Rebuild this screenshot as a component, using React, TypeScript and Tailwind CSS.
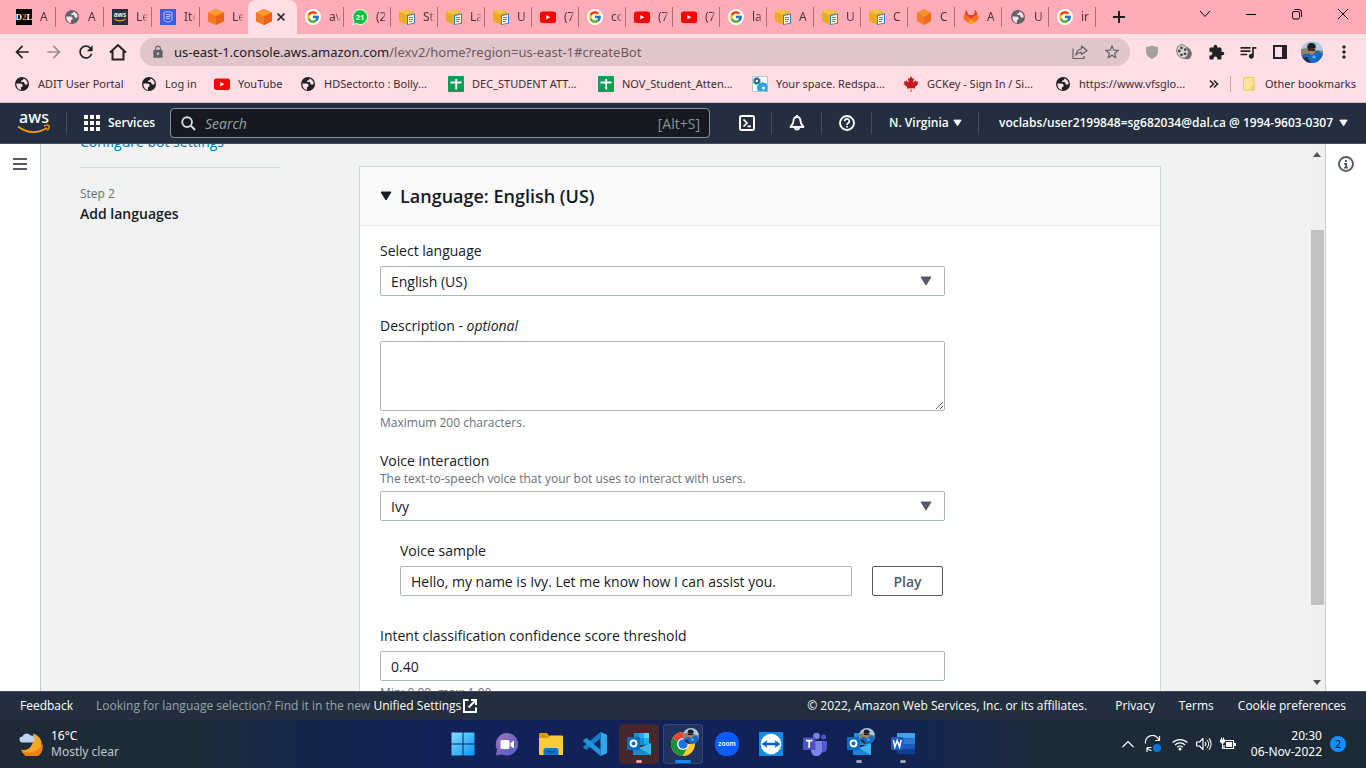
import React from "react";
import { FcGoogle } from "react-icons/fc";
import { FaCanadianMapleLeaf } from "react-icons/fa";
import {
  MdArrowBack,
  MdArrowForward,
  MdRefresh,
  MdLock,
  MdStarBorder,
  MdExtension,
  MdQueueMusic,
  MdMoreVert,
} from "react-icons/md";

/* ---------- Favicons ---------- */

function Globe({ className }: { className: string }) {
  return (
    <svg viewBox="0 0 16 16" className={`size-4 shrink-0 ${className}`} aria-hidden="true">
      <circle cx="8" cy="8" r="7" fill="currentColor" />
      <path
        d="M2.400 7.600h4c1.400 0 2.200.8 2.200 2 0 1.100-.8 1.600-1.700 1.600v2.900C4.300 13.700 2.200 11 2.400 7.600zM9.300 2.500c.1 1.200-.4 2-1.600 2-.9 0-.9 1-.2 1.400.9.400 1.900-.3 2.600.5.600.8.200 1.900 1.200 2.200.9.200 1.300-.4 2.300-.3.200-2.800-1.600-5.200-4.300-5.800z"
        fill="#ffdfe5"
      />
    </svg>
  );
}

function D2L() {
  return (
    <span className="flex size-4 items-center justify-center bg-black font-['Liberation_Serif',serif] text-[9px] font-bold leading-none text-white">
      D<span className="text-orange-400">2</span>L
    </span>
  );
}

function AwsTile() {
  return (
    <svg viewBox="0 0 16 16" className="size-4" aria-hidden="true">
      <rect width="16" height="16" fill="#232f3e" />
      <text x="8" y="8" fontSize="6.500" fontWeight="600" textAnchor="middle" fill="#fff" fontFamily="Noto Sans, sans-serif">
        aws
      </text>
      <path d="M2.500 10c3.500 2.300 7.500 2.300 11 0" stroke="#f90" strokeWidth="1.200" fill="none" />
    </svg>
  );
}

function LexTile() {
  return (
    <svg viewBox="0 0 16 16" className="size-4" aria-hidden="true">
      <rect width="16" height="16" fill="#3f5be0" />
      <path
        d="M4 3.500c2-1 6-1 8 0M4 3.500v7c0 1.500 1.500 2.500 4 2.500s4-1 4-2.500v-7M6 5.500h4v2H6.500v2H10"
        stroke="#b9c6ff"
        strokeWidth="1"
        fill="none"
      />
    </svg>
  );
}

function OrangeCube() {
  return (
    <svg viewBox="0 0 16 16" className="size-4" aria-hidden="true">
      <path d="M8 0l8 3.400v8.900L8 16 0 12.300V3.400z" fill="#f58536" />
      <path d="M8 0l8 3.400L8 7 0 3.400z" fill="#fa9a2e" />
      <path d="M8 7l8-3.600v8.900L8 16z" fill="#e8621b" />
      <path d="M0 3.400L8 7v9l-8-3.700z" fill="#f47b20" />
    </svg>
  );
}

function OrangeHex() {
  return (
    <svg viewBox="0 0 16 16" className="size-4" aria-hidden="true">
      <path d="M8 0l7 4v8l-7 4-7-4V4z" fill="#f47b20" />
      <path d="M8 0l7 4-7 4-7-4z" fill="#fa8f2e" />
      <path d="M8 8l7-4v8l-7 4z" fill="#ee6a1c" />
    </svg>
  );
}

function YellowCube() {
  return (
    <svg viewBox="0 0 16 16" className="size-4" aria-hidden="true">
      <path d="M7 0l7.500 2.800v8.700L7 15.300 0 12V2.800z" fill="#efb02e" />
      <path d="M0 2.800l7 3v9.500L0 12z" fill="#f2a81d" />
      <path d="M7 0l7.500 2.800L7 5.800 0 2.800z" fill="#f5bf4a" />
      <path d="M8 6l8-1.500v10L8 16z" fill="#2f86b8" />
      <path d="M9 7l6-1.200v7.900L9 14.900z" fill="#fff" />
      <path d="M10 8.500h4M10 10.500h4M10 12.500h3" stroke="#2f86b8" strokeWidth="1" />
    </svg>
  );
}

function YouTube() {
  return (
    <svg viewBox="0 0 16 16" className="size-4 shrink-0" aria-hidden="true">
      <rect x="0" y="2.500" width="16" height="11.500" rx="2.500" fill="#f00" />
      <path d="M6.300 6v4.500L10.300 8.200z" fill="#fff" />
    </svg>
  );
}

function Google() {
  return (
    <span className="flex size-4 shrink-0 items-center justify-center rounded-full bg-white">
      <FcGoogle className="size-[14px]" />
    </span>
  );
}

function WhatsApp() {
  return (
    <svg viewBox="0 0 16 16" className="size-4" aria-hidden="true">
      <path d="M8 0a8 8 0 1 1-3.600 15.100L.3 16l1-4A8 8 0 0 1 8 0z" fill="#eafbe9" />
      <path d="M8 1a7 7 0 1 1-3.400 13.100L1.600 14.800l.8-3A7 7 0 0 1 8 1z" fill="#12c143" />
      <text x="8" y="10.800" fontSize="7.500" fontWeight="700" textAnchor="middle" fill="#fff" fontFamily="Noto Sans, sans-serif">
        21
      </text>
    </svg>
  );
}

function GitLab() {
  return (
    <svg viewBox="0 0 16 16" className="size-4" aria-hidden="true">
      <path d="M3.300 1l2.200 5h5l2.200-5 2.600 6.500c.5 1.500 0 3-1.200 3.900L8 15.500l-6.100-4.100A3.400 3.400 0 0 1 .7 7.500z" fill="#fc6d26" />
      <path d="M3.300 1l2.200 5h5l2.200-5 1.500 4-2.700 2L8 10 4.500 7 1.800 5z" fill="#e24329" />
      <path d="M8 9.500l3.200 3.900L8 15.500l-3.200-2.100z" fill="#fca326" />
    </svg>
  );
}

function Sheets() {
  return (
    <svg viewBox="0 0 16 16" className="size-4 shrink-0" aria-hidden="true">
      <rect width="16" height="16" rx="1" fill="#0f9d58" />
      <path d="M2.500 6.500h11M8.200 3v10.500" stroke="#fff" strokeWidth="1.800" />
    </svg>
  );
}

function Gears() {
  return (
    <svg viewBox="0 0 16 16" className="size-4 shrink-0" aria-hidden="true">
      <rect x=".5" y=".5" width="15" height="15" fill="#fff" stroke="#b9c6cc" />
      <circle cx="4.800" cy="5" r="2.200" fill="none" stroke="#1d7291" strokeWidth="2" />
      <circle cx="4.800" cy="5" r="3.500" fill="none" stroke="#1d7291" strokeWidth="1" strokeDasharray="1.400 1.350" />
      <path d="M6 15a5 5 0 0 1 9-6v6z" fill="#2ba6dc" />
      <circle cx="11" cy="12" r="5.200" fill="none" stroke="#2ba6dc" strokeWidth="1.200" strokeDasharray="1.800 1.470" />
      <circle cx="11.500" cy="12" r="1.600" fill="#fff" />
    </svg>
  );
}

function FolderIcon() {
  return (
    <svg viewBox="0 0 16 16" className="size-4 shrink-0" aria-hidden="true">
      <path d="M2.500 1.500h10.500v12.500H2.500z" fill="#ffe391" stroke="#ecca5a" />
      <path d="M11 10.500h2v3.500h-2z" fill="#ffe391" stroke="#e9c64a" />
    </svg>
  );
}

function Avatar({ className }: { className: string }) {
  return (
    <svg viewBox="0 0 22 22" className={className} aria-hidden="true">
      <defs>
        <clipPath id="avatar-clip">
          <circle cx="11" cy="11" r="11" />
        </clipPath>
      </defs>
      <g clipPath="url(#avatar-clip)">
        <rect width="22" height="22" fill="#a9cbe0" />
        <path d="M0 8l5-1 4 3 6-1 7 1v12H0z" fill="#8c8069" />
        <path d="M1 14l7-2 9-2 5 3v9H2z" fill="#1668c4" />
        <path d="M0 17l6-1 4 6H2z" fill="#222c3c" />
        <path d="M7 8c0-1 7-1.500 7 0v4l-3 2-3-1z" fill="#b27c5c" />
        <path d="M6.500 8C5.500 3.500 8 1.500 11 2s4 2 3.500 5.500z" fill="#1b1b20" />
        <path d="M7 8.300h7v1.400H7z" fill="#101014" />
        <circle cx="13" cy="16" r="1.800" fill="#4fb1ee" />
      </g>
    </svg>
  );
}

function Triangle({ className }: { className: string }) {
  return (
    <svg viewBox="0 0 12 10" className={className} aria-hidden="true">
      <path d="M1 1h10L6 9z" fill="currentColor" stroke="currentColor" strokeLinejoin="round" />
    </svg>
  );
}

/* ---------- Browser chrome ---------- */

const leftTabs = [
  { icon: <D2L />, title: "A" },
  { icon: <Globe className="text-[#5f6368]" />, title: "A" },
  { icon: <AwsTile />, title: "Le" },
  { icon: <LexTile />, title: "Ite" },
  { icon: <OrangeCube />, title: "Le" },
];

const rightTabs = [
  { icon: <Google />, title: "av" },
  { icon: <WhatsApp />, title: "(2" },
  { icon: <YellowCube />, title: "St" },
  { icon: <YellowCube />, title: "La" },
  { icon: <YellowCube />, title: "U" },
  { icon: <YouTube />, title: "(7" },
  { icon: <Google />, title: "co" },
  { icon: <YouTube />, title: "(7" },
  { icon: <YouTube />, title: "(7" },
  { icon: <Google />, title: "la" },
  { icon: <YellowCube />, title: "A" },
  { icon: <YellowCube />, title: "U" },
  { icon: <YellowCube />, title: "C" },
  { icon: <OrangeHex />, title: "C" },
  { icon: <GitLab />, title: "A" },
  { icon: <Globe className="text-[#5f6368]" />, title: "U" },
  { icon: <Google />, title: "ir" },
];

function Tab({ icon, title, line }: { icon: React.ReactNode; title: string; line: boolean }) {
  return (
    <button className="flex h-[34px] w-full items-center pl-2">
      <span className="flex w-4 shrink-0 items-center justify-center">{icon}</span>
      <span className="ml-2 w-3 overflow-hidden text-left text-[12px] text-[#4a3438] [mask-image:linear-gradient(to_right,black_50%,transparent)]">
        {title}
      </span>
      <span className={line ? "ml-auto h-5 w-px bg-[#a3717a]" : "ml-auto h-5 w-px"} />
    </button>
  );
}

function TabStrip() {
  return (
    <div className="flex h-[34px] items-center bg-[#ffacb9] pl-2">
      {leftTabs.map((t, i) => (
        <div key={i} className="w-12 shrink-0">
          <Tab icon={t.icon} title={t.title} line={i < 4} />
        </div>
      ))}
      <div className="flex h-full w-[49px] shrink-0 items-center gap-1 rounded-t-lg bg-[#ffdfe5] pl-2">
        <OrangeCube />
        <button aria-label="Close tab">
          <svg viewBox="0 0 10 10" className="size-[10px]">
            <path d="M1.500 1.500l7 7M8.500 1.500l-7 7" stroke="#202124" strokeWidth="1.600" />
          </svg>
        </button>
      </div>
      {rightTabs.map((t, i) => (
        <div key={i} className="w-[47px] shrink-0">
          <Tab icon={t.icon} title={t.title} line />
        </div>
      ))}
      <button aria-label="New tab" className="ml-4">
        <svg viewBox="0 0 14 14" className="size-[14px]">
          <path d="M7 1v12M1 7h12" stroke="#202124" strokeWidth="2" />
        </svg>
      </button>
      <div className="ml-auto flex h-7 items-center self-start text-black">
        <button aria-label="Search tabs" className="flex w-[46px] justify-center">
          <svg viewBox="0 0 12 12" className="size-3">
            <path d="M1 3l5 5.500L11 3" stroke="currentColor" fill="none" />
          </svg>
        </button>
        <button aria-label="Minimise" className="flex w-[46px] justify-center">
          <svg viewBox="0 0 12 12" className="size-3">
            <path d="M1 6.500h10" stroke="currentColor" />
          </svg>
        </button>
        <button aria-label="Restore" className="flex w-[46px] justify-center">
          <svg viewBox="0 0 12 12" className="size-3">
            <rect x="1.500" y="3.500" width="7" height="7.500" rx="1.500" stroke="currentColor" fill="none" />
            <path d="M3.500 1.500h4.500a2.500 2.500 0 0 1 2.500 2.500v5" stroke="currentColor" fill="none" />
          </svg>
        </button>
        <button aria-label="Close" className="flex w-[46px] justify-center">
          <svg viewBox="0 0 12 12" className="size-3">
            <path d="M1 1l10 10M11 1L1 11" stroke="currentColor" />
          </svg>
        </button>
      </div>
    </div>
  );
}

function Toolbar() {
  return (
    <div className="flex h-9 items-center bg-[#ffdfe5] pr-1.5 pl-3 text-[#202124]">
      <button aria-label="Back" className="flex w-8 shrink-0">
        <MdArrowBack className="size-5" />
      </button>
      <button aria-label="Forward" className="flex w-8 shrink-0 text-[#a58b90]">
        <MdArrowForward className="size-5" />
      </button>
      <button aria-label="Reload" className="flex w-8 shrink-0">
        <MdRefresh className="size-5" />
      </button>
      <button aria-label="Home" className="flex w-8 shrink-0">
        <svg viewBox="0 0 20 20" className="size-5">
          <path d="M2 10.500l8-7.500 8 7.500M4.500 9v8.500h11V9" stroke="currentColor" strokeWidth="2" fill="none" />
        </svg>
      </button>
      <div className="flex h-7 min-w-0 flex-1 items-center rounded-full bg-[#e0c5ca] px-[11px] text-[#5f6368]">
        <MdLock className="size-[14px] shrink-0" />
        <p className="ml-[9px] min-w-0 flex-1 truncate text-[13px] leading-5 text-[#6b5b60]">
          <span className="text-[#202124]">us-east-1.console.aws.amazon.com</span>
          /lexv2/home?region=us-east-1#createBot
        </p>
        <button aria-label="Share" className="mr-[15px]">
          <svg viewBox="0 0 16 16" className="size-4">
            <path d="M1 4.500v10h11V12" stroke="currentColor" strokeWidth="1.200" fill="none" />
            <path d="M9.500 2l5.500 4.500-5.500 4V8.300c-2.500 0-4.300.7-5.500 2.700.3-3.500 2.300-5.700 5.500-6z" stroke="currentColor" strokeWidth="1.200" fill="none" strokeLinejoin="round" />
          </svg>
        </button>
        <button aria-label="Bookmark this page" className="-mr-0.5">
          <MdStarBorder className="size-[18px]" />
        </button>
      </div>
      <div className="ml-1.5 flex shrink-0 items-center">
        <button aria-label="Shield extension" className="flex w-8 justify-center text-[#a3a0a1]">
          <svg viewBox="0 0 14 14" className="size-[14px]">
            <path d="M7 .3c1.800 1.200 3.800 1.600 6 1.700v4.500C13 10 10.500 12.500 7 13.900 3.500 12.500 1 10 1 6.500V2C3.200 1.900 5.200 1.500 7 .3z" fill="currentColor" />
          </svg>
        </button>
        <button aria-label="Video extension" className="flex w-8 justify-center">
          <svg viewBox="0 0 16 16" className="size-4">
            <ellipse cx="10" cy="9" rx="5.500" ry="6.500" fill="#6f6a69" transform="rotate(-25 10 9)" />
            <ellipse cx="6.500" cy="7.500" rx="5.600" ry="7" fill="#d8d5d5" stroke="#666" strokeWidth=".8" transform="rotate(-20 6.500 7.500)" />
            <circle cx="5.500" cy="3.800" r="1.400" fill="#444" />
            <circle cx="3.300" cy="7" r="1.400" fill="#444" />
            <circle cx="9.200" cy="5.600" r="1.400" fill="#444" />
            <circle cx="5.500" cy="10.800" r="1.400" fill="#444" />
            <circle cx="9" cy="9.800" r="1.400" fill="#444" />
          </svg>
        </button>
        <button aria-label="Extensions" className="flex w-8 justify-center">
          <MdExtension className="size-[17px]" />
        </button>
        <button aria-label="Media controls" className="flex w-8 justify-center">
          <MdQueueMusic className="size-5" />
        </button>
        <button aria-label="Side panel" className="flex w-8 justify-center">
          <svg viewBox="0 0 14 14" className="size-[14px]">
            <path d="M1 1h12v12H1z" stroke="currentColor" strokeWidth="2" fill="none" />
            <path d="M9 1h4v12H9z" fill="currentColor" />
          </svg>
        </button>
        <button aria-label="Profile" className="flex w-8 justify-center">
          <Avatar className="size-[22px]" />
        </button>
        <button aria-label="Menu" className="flex w-8 justify-center">
          <MdMoreVert className="size-5" />
        </button>
      </div>
    </div>
  );
}

const bookmarks = [
  { icon: <Globe className="text-[#202124]" />, title: "ADIT User Portal", width: "w-[127px]" },
  { icon: <Globe className="text-[#202124]" />, title: "Log in", width: "w-[73px]" },
  { icon: <YouTube />, title: "YouTube", width: "w-[86px]" },
  { icon: <Globe className="text-[#202124]" />, title: "HDSector.to : Bolly...", width: "w-[148px]" },
  { icon: <Sheets />, title: "DEC_STUDENT ATT...", width: "w-[150px]" },
  { icon: <Sheets />, title: "NOV_Student_Atten...", width: "w-[154px]" },
  { icon: <Gears />, title: "Your space. Redspa...", width: "w-[151px]" },
  { icon: <FaCanadianMapleLeaf className="size-4 shrink-0 text-[#c4161c]" />, title: "GCKey - Sign In / Si...", width: "w-[152px]" },
  { icon: <Globe className="text-[#202124]" />, title: "https://www.vfsglo...", width: "w-[148px]" },
];

function BookmarkBar() {
  return (
    <div className="flex h-[33px] items-center border-b border-[#d9bcc2] bg-[#ffdfe5] pb-1 pl-[14px] text-[11px] text-[#3c2b30]">
      {bookmarks.map((b) => (
        <a key={b.title} href="#" className={`flex shrink-0 items-center gap-2 whitespace-nowrap ${b.width}`}>
          {b.icon}
          {b.title}
        </a>
      ))}
      <button aria-label="More bookmarks" className="ml-1.5">
        <svg viewBox="0 0 10 10" className="size-[10px]">
          <path d="M1 1.500L4.500 5 1 8.500M5 1.500L8.500 5 5 8.500" stroke="#202124" strokeWidth="1.600" fill="none" />
        </svg>
      </button>
      <div className="ml-auto flex items-center gap-2 border-l border-[#c9a7ae] pr-2.5 pl-2.5">
        <FolderIcon />
        <a href="#">Other bookmarks</a>
      </div>
    </div>
  );
}

/* ---------- AWS console ---------- */

function ConsoleHeader() {
  return (
    <header className="flex h-[41px] shrink-0 items-center border-b border-[#414d5c] bg-[#232f3e] text-[12px] font-semibold text-white">
      <a href="#" aria-label="AWS home" className="w-[66px] shrink-0 pl-[17px]">
        <svg viewBox="0 0 34 22" className="h-[22px] w-[34px]">
          <text x="17" y="11" fontSize="16" fontWeight="500" textAnchor="middle" fill="#fff" fontFamily="Noto Sans, sans-serif">
            aws
          </text>
          <path d="M1 14.500c9 6.800 19.500 7 29 1.500" stroke="#f90" strokeWidth="1.800" fill="none" />
          <path d="M27 14c2-1 4-1 5-.3.400 1.300-.5 3.500-1.700 4.800" stroke="#f90" strokeWidth="1.400" fill="none" />
        </svg>
      </a>
      <span className="h-[22px] w-px shrink-0 bg-[#414d5c]" />
      <button className="flex w-[103px] shrink-0 items-center gap-2 pl-[17px]">
        <svg viewBox="0 0 16 16" className="size-4" fill="currentColor" aria-hidden="true">
          <path d="M0 0h4v4H0zM6 0h4v4H6zM12 0h4v4h-4zM0 6h4v4H0zM6 6h4v4H6zM12 6h4v4h-4zM0 12h4v4H0zM6 12h4v4H6zM12 12h4v4h-4z" />
        </svg>
        Services
      </button>
      <label className="flex h-[30px] w-[540px] items-center rounded-sm border border-[#879596] bg-[#16191f] pr-[9px] pl-[10px]">
        <svg viewBox="0 0 16 16" className="size-[15px] shrink-0 text-[#d5dbdb]" aria-hidden="true">
          <circle cx="6.500" cy="6.500" r="5.200" stroke="currentColor" strokeWidth="2" fill="none" />
          <path d="M10.500 10.500L15 15" stroke="currentColor" strokeWidth="2.200" />
        </svg>
        <input
          type="search"
          aria-label="Search"
          placeholder="Search"
          className="ml-[9px] min-w-0 flex-1 bg-transparent text-[14px] font-normal italic outline-none placeholder:text-[#95a5a6]"
        />
        <span className="text-[14px] font-normal text-[#879596]">[Alt+S]</span>
      </label>
      <div className="ml-3 flex shrink-0 items-center">
        <button aria-label="CloudShell" className="flex h-[22px] w-[50px] items-center justify-center border-r border-[#414d5c]">
          <svg viewBox="0 0 16 16" className="size-4">
            <rect x="1" y="1" width="14" height="14" rx="1.500" stroke="currentColor" strokeWidth="2" fill="none" />
            <path d="M4.500 4.500L8 8l-3.500 3.500M8.500 11.300H12" stroke="currentColor" strokeWidth="1.700" fill="none" />
          </svg>
        </button>
        <button aria-label="Notifications" className="flex h-[22px] w-[50px] items-center justify-center border-r border-[#414d5c]">
          <svg viewBox="0 0 16 16" className="size-4">
            <path d="M8 2c-2.300 0-3.500 1.600-3.500 4 0 2.500-1 3.500-3 6h13c-2-2.500-3-3.500-3-6 0-2.400-1.200-4-3.500-4z" stroke="currentColor" strokeWidth="1.900" fill="none" strokeLinejoin="round" />
            <path d="M8 0v2M6 12.500a2 2 0 0 0 4 0" stroke="currentColor" strokeWidth="1.900" fill="none" />
          </svg>
        </button>
        <button aria-label="Support" className="flex h-[22px] w-[50px] items-center justify-center border-r border-[#414d5c]">
          <svg viewBox="0 0 16 16" className="size-4">
            <circle cx="8" cy="8" r="7" stroke="currentColor" strokeWidth="1.900" fill="none" />
            <path d="M5.700 6.300a2.300 2.300 0 1 1 3.300 2c-.7.400-1 .7-1 1.600" stroke="currentColor" strokeWidth="1.700" fill="none" />
            <path d="M7.100 10.900h1.800v1.700H7.100z" fill="currentColor" />
          </svg>
        </button>
        <button className="flex h-[22px] w-[107px] items-center gap-1 border-r border-[#414d5c] pl-[17px] whitespace-nowrap">
          N. Virginia
          <Triangle className="h-2 w-[9px] shrink-0" />
        </button>
      </div>
      <button className="ml-auto flex shrink-0 items-center gap-1.5 pr-[18px] whitespace-nowrap">
        voclabs/user2199848=sg682034@dal.ca @ 1994-9603-0307
        <Triangle className="h-2 w-[9px]" />
      </button>
    </header>
  );
}

const labelClass = "mb-[5px] block text-[14px] leading-5 text-[#16191f]";
const hintClass = "text-[12px] leading-4 text-[#687078]";
const fieldClass =
  "block h-[30px] w-full appearance-none rounded-xs border border-[#aab7b8] bg-white px-[10px] text-[14px] text-[#16191f]";

function SelectField({ id, value }: { id: string; value: string }) {
  return (
    <div className="relative">
      <select id={id} defaultValue={value} className={fieldClass}>
        <option>{value}</option>
      </select>
      <Triangle className="pointer-events-none absolute top-[10px] right-[13px] h-[10px] w-3 text-[#545b64]" />
    </div>
  );
}

function LanguageForm() {
  return (
    <form className="flex w-[565px] max-w-full flex-col gap-5">
      <div>
        <label htmlFor="language" className={labelClass}>Select language</label>
        <SelectField id="language" value="English (US)" />
      </div>
      <div>
        <label htmlFor="description" className={labelClass}>
          Description - <i>optional</i>
        </label>
        <textarea id="description" className="block h-[70px] w-full rounded-xs border border-[#aab7b8] bg-white px-[10px] text-[14px]" />
        <p className={`mt-1 ${hintClass}`}>Maximum 200 characters.</p>
      </div>
      <div>
        <label htmlFor="voice" className="block text-[14px] leading-5 text-[#16191f]">Voice interaction</label>
        <p className={`mb-1 ${hintClass}`}>The text-to-speech voice that your bot uses to interact with users.</p>
        <SelectField id="voice" value="Ivy" />
      </div>
      <div className="pr-0.5 pb-[10px] pl-5">
        <label htmlFor="sample" className={labelClass}>Voice sample</label>
        <div className="flex gap-5">
          <input id="sample" defaultValue="Hello, my name is Ivy. Let me know how I can assist you." className={`min-w-0 flex-1 ${fieldClass}`} />
          <button type="button" className="h-[30px] w-[71px] shrink-0 rounded-xs border border-[#545b64] bg-white text-[14px] font-semibold text-[#545b64]">
            Play
          </button>
        </div>
      </div>
      <div>
        <label htmlFor="threshold" className={labelClass}>Intent classification confidence score threshold</label>
        <input id="threshold" defaultValue="0.40" className={fieldClass} />
        <p className={`mt-1 ${hintClass}`}>Min: 0.00, max: 1.00</p>
      </div>
    </form>
  );
}

function ScrollBar() {
  return (
    <div className="flex w-[15px] shrink-0 flex-col items-center bg-[#f0f0f0] pr-px" aria-hidden="true">
      <span className="flex h-[17px] items-center pt-1">
        <svg viewBox="0 0 8 5" className="h-[5px] w-2"><path d="M0 5l4-5 4 5z" fill="#505050" /></svg>
      </span>
      <span className="grow-69" />
      <span className="w-[13px] grow-375 bg-[#c1c1c1]" />
      <span className="grow-69" />
      <span className="flex h-[17px] items-center">
        <svg viewBox="0 0 8 5" className="h-[5px] w-2"><path d="M0 0l4 5 4-5z" fill="#505050" /></svg>
      </span>
    </div>
  );
}

function ConsoleBody() {
  return (
    <div className="flex min-h-0 flex-1 bg-[#f1f3f3]">
      <aside className="w-[41px] shrink-0 border-r border-[#c6cccc] bg-white pt-3 pl-[13px]">
        <button aria-label="Open navigation" className="block">
          <svg viewBox="0 0 14 16" className="h-4 w-[14px] text-[#545b64]">
            <path d="M0 3h14M0 8h14M0 13h14" stroke="currentColor" strokeWidth="2" />
          </svg>
        </button>
      </aside>
      <div className="min-w-0 flex-1 overflow-hidden">
        <div className="-mt-3 flex gap-[79px] pl-[39px]">
          <nav className="w-[200px] shrink-0 text-[14px]">
            <a href="#" className="block border-b border-[#d5dbdb] pb-[15px] leading-5 text-[#0073bb]">Configure bot settings</a>
            <p className="mt-[18px] text-[12px] leading-4 text-[#687078]">Step 2</p>
            <p className="mt-0.5 leading-5 font-semibold text-[#16191f]">Add languages</p>
          </nav>
          <main className="max-w-[802px] min-w-0 flex-1">
            <h1 className="-mt-[22px] mb-5 text-[26px] leading-9 text-[#16191f]">Add languages</h1>
            <section className="border border-[#d0d6d6] bg-white">
              <h2 className="border-b border-[#eaeded] bg-[#fafafa] px-5">
                <button className="flex h-[58px] items-center gap-2 text-[18px] font-semibold text-[#16191f]">
                  <Triangle className="h-[10px] w-3" />
                  Language: English (US)
                </button>
              </h2>
              <div className="px-5 pt-[15px] pb-5">
                <LanguageForm />
              </div>
            </section>
          </main>
        </div>
      </div>
      <ScrollBar />
      <aside className="w-[41px] shrink-0 border-l border-[#c6cccc] bg-white pt-3">
        <button aria-label="Open information panel" className="mx-auto block w-4">
          <svg viewBox="0 0 16 16" className="size-4 text-[#545b64]">
            <circle cx="8" cy="8" r="7" stroke="currentColor" strokeWidth="1.900" fill="none" />
            <path d="M7 4h2v2H7zM6 7h3v4h1v1.500H6V11h1V8.500H6z" fill="currentColor" />
          </svg>
        </button>
      </aside>
    </div>
  );
}

function ConsoleFooter() {
  return (
    <footer className="flex h-[29px] shrink-0 items-center border-t border-[#414d5c] bg-[#232f3e] px-5 text-[12px] whitespace-nowrap text-white">
      <a href="#" className="w-[76px] font-medium">Feedback</a>
      <p className="flex items-center text-[#95a5a6]">
        Looking for language selection? Find it in the new&nbsp;
        <a href="#" className="flex items-center gap-0.5 font-medium text-white">
          Unified Settings
          <svg viewBox="0 0 14 14" className="size-[14px]" aria-hidden="true">
            <path d="M5.500 1H1v12h12V8.500M8 1h5v5M13 1L5.500 8.500" stroke="currentColor" strokeWidth="2" fill="none" />
          </svg>
        </a>
      </p>
      <div className="ml-auto flex gap-6 font-medium">
        <span className="mr-1">© 2022, Amazon Web Services, Inc. or its affiliates.</span>
        <a href="#">Privacy</a>
        <a href="#">Terms</a>
        <a href="#">Cookie preferences</a>
      </div>
    </footer>
  );
}

/* ---------- Taskbar ---------- */

function OutlookIcon() {
  return (
    <svg viewBox="0 0 24 24" className="size-6">
      <path d="M7 1h15v12H7z" fill="#1490df" />
      <path d="M12 1h5v5h-5z" fill="#28a8ea" />
      <path d="M17 1h5v5h-5z" fill="#50d9ff" />
      <path d="M17 6h5v6h-5z" fill="#28a8ea" />
      <path d="M6 11l9 5 9-5v12H6z" fill="#1a86d8" />
      <path d="M24 11v12L12 16z" fill="#3cb4f0" />
      <rect y="5" width="13" height="13" rx="1" fill="#0f6cbd" />
      <circle cx="6.500" cy="11.500" r="3" fill="none" stroke="#fff" strokeWidth="1.900" />
    </svg>
  );
}

const apps = [
  {
    name: "Start",
    icon: (
      <svg viewBox="0 0 24 24" className="size-6">
        <defs>
          <linearGradient id="win" x1="0" y1="0" x2="1" y2="1">
            <stop offset="0" stopColor="#7fe0ff" />
            <stop offset="1" stopColor="#0a93f5" />
          </linearGradient>
        </defs>
        <path d="M.5.5h11v11H.5zM12.500.5h11v11h-11zM.5 12.500h11v11H.5zM12.500 12.500h11v11h-11z" fill="url(#win)" />
      </svg>
    ),
  },
  {
    name: "Chat",
    icon: (
      <svg viewBox="0 0 24 24" className="size-6">
        <defs>
          <linearGradient id="chat" x1="0" y1="0" x2="1" y2="1">
            <stop offset="0" stopColor="#a276b8" />
            <stop offset="1" stopColor="#5059c9" />
          </linearGradient>
        </defs>
        <path d="M12 1a11.300 11.300 0 1 1-5 21.500L1 23.500l1-6A11.300 11.300 0 0 1 12 1z" fill="url(#chat)" />
        <rect x="5.500" y="8" width="9" height="9" rx="1.500" fill="#fff" />
        <path d="M15.500 11l3.500-2.500v8L15.500 14z" fill="#fff" />
      </svg>
    ),
  },
  {
    name: "File Explorer",
    icon: (
      <svg viewBox="0 0 24 24" className="size-6">
        <path d="M0 2.500C0 1.500.5 1 1.500 1H8l2.500 3H23v6H0z" fill="#d99a0b" />
        <path d="M0 6h9l2-2.500h11.500c1 0 1.500.5 1.500 1.500v18H1.500C.5 23 0 22.500 0 21.500z" fill="#fccb3c" />
        <path d="M4.500 23v-4.500c0-1.500 1-2.500 2.500-2.500h10c1.500 0 2.500 1 2.500 2.500V23z" fill="#0f75c8" />
        <path d="M8 19h8v1.500H8z" fill="#0b4f91" />
      </svg>
    ),
  },
  {
    name: "Visual Studio Code",
    icon: (
      <svg viewBox="0 0 24 24" className="size-6">
        <path d="M17.500 0L24 2.800v18.400L17.500 24z" fill="#2fa8f0" />
        <path d="M17.500 0v6.500L3.500 18 .5 16c-.6-.5-.6-1 0-1.500z" fill="#0f7fcb" />
        <path d="M17.500 24v-6.500L3.500 6 .5 8c-.6.500-.6 1 0 1.500z" fill="#2196dc" />
      </svg>
    ),
  },
  { name: "Outlook", cell: "bg-[#46282c]", mark: "w-1.5 bg-[#ff99a4]", icon: <OutlookIcon /> },
  {
    name: "Google Chrome",
    cell: "bg-[#22325f] ring-1 ring-inset ring-white/10",
    mark: "w-4 bg-[#1190ff]",
    badge: true,
    icon: (
      <svg viewBox="0 0 24 24" className="size-6">
        <circle cx="12" cy="12" r="12" fill="#fcc934" />
        <path d="M12 12L1.600 6A12 12 0 0 1 22.400 6z" fill="#ea4335" />
        <path d="M1.600 6a12 12 0 0 0 9.900 18l5.700-9.500L12 12z" fill="#1e8e3e" />
        <circle cx="12" cy="12" r="6" fill="#fff" />
        <circle cx="12" cy="12" r="4.700" fill="#1a73e8" />
      </svg>
    ),
  },
  {
    name: "Zoom",
    icon: (
      <svg viewBox="0 0 24 24" className="size-6">
        <rect width="24" height="24" rx="11" fill="#0b5cff" />
        <text x="12" y="14" fontSize="6.500" fontWeight="600" textAnchor="middle" fill="#fff" fontFamily="Noto Sans, sans-serif">
          zoom
        </text>
      </svg>
    ),
  },
  {
    name: "TeamViewer",
    icon: (
      <svg viewBox="0 0 24 24" className="size-6">
        <rect width="24" height="24" rx="1" fill="#0e8ee9" />
        <circle cx="12" cy="12" r="10.300" fill="#fff" />
        <path d="M2.500 12l6-4-1 2.800h9l-1-2.800 6 4-6 4 1-2.800h-9l1 2.800z" fill="#0a63c4" />
      </svg>
    ),
  },
  {
    name: "Microsoft Teams",
    icon: (
      <svg viewBox="0 0 24 24" className="size-6">
        <circle cx="13.500" cy="4" r="3.300" fill="#7b83eb" />
        <circle cx="20.500" cy="5" r="2.500" fill="#5059c9" />
        <path d="M17 9h7v7c0 3-2 4.500-4.500 4.500S16 19 16 17z" fill="#5059c9" />
        <path d="M8 9h11v9c0 4-2.500 6-5.500 6S8 22 8 18z" fill="#7b83eb" />
        <rect y="5.500" width="12.500" height="12.500" rx="1" fill="#4b53bc" />
        <path d="M3 8.700h6.500M6.200 8.700v7" stroke="#fff" strokeWidth="1.700" />
      </svg>
    ),
  },
  { name: "Outlook (profile)", mark: "w-1.5 bg-[#9aa0ad]", badge: true, icon: <OutlookIcon /> },
  {
    name: "Word",
    mark: "w-1.5 bg-[#9aa0ad]",
    icon: (
      <svg viewBox="0 0 24 24" className="size-6">
        <path d="M6 1h18v5.500H6z" fill="#41a5ee" />
        <path d="M6 6.500h18V12H6z" fill="#2b7cd3" />
        <path d="M6 12h18v5.500H6z" fill="#185abd" />
        <path d="M6 17.500h18V22H6z" fill="#103f91" />
        <rect y="5" width="12.500" height="13" rx="1" fill="#185abd" />
        <path d="M2.300 8l1.600 7 2.300-6.500L8.500 15l1.700-7" stroke="#fff" strokeWidth="1.500" fill="none" />
      </svg>
    ),
  },
];

function Taskbar() {
  return (
    <footer className="grid h-12 shrink-0 grid-cols-[1fr_auto_1fr] items-center bg-[linear-gradient(90deg,#1e2b37_0%,#1e2c38_14%,#13274a_22%,#122258_32%,#122155_62%,#14254f_68%,#1d2b39_76%,#1c2a36_100%)] text-[12px] text-white">
      <button className="flex items-center gap-2 pl-[19px] text-left leading-4">
        <svg viewBox="0 0 24 24" className="size-6">
          <path d="M14 1.500A11 11 0 1 1 2 17.500c7 2.500 14-4 12-16z" fill="#f5a623" />
          <path d="M23.500 12A11 11 0 0 1 2 17.500c5 5 16 4 21.500-5.500z" fill="#ef7d1a" />
          <path d="M3.500 10.500a3 3 0 0 1 0-6 4.500 4.500 0 0 1 8-1 3.500 3.500 0 0 1 1 7z" fill="#bcd3f7" />
        </svg>
        <span>
          16°C
          <span className="block text-[#c3c9ce]">Mostly clear</span>
        </span>
      </button>
      <div className="flex gap-1">
        {apps.map((app) => (
          <button key={app.name} aria-label={app.name} className={`relative flex size-10 items-center justify-center rounded ${app.cell ?? ""}`}>
            {app.icon}
            {app.badge && <Avatar className="absolute top-1 right-1 size-4" />}
            {app.mark && (
              <span className="absolute inset-x-0 bottom-px flex justify-center">
                <span className={`h-[3px] rounded-full ${app.mark}`} />
              </span>
            )}
          </button>
        ))}
      </div>
      <div className="flex items-center justify-end pr-5">
        <button aria-label="Show hidden icons" className="mr-2.5">
          <svg viewBox="0 0 12 8" className="h-2 w-3">
            <path d="M.5 7L6 1.500 11.500 7" stroke="#fff" strokeWidth="1.200" fill="none" />
          </svg>
        </button>
        <button aria-label="Updates" className="mr-2.5">
          <svg viewBox="0 0 18 18" className="size-[18px]">
            <path d="M1.500 8.500A7 7 0 0 1 15 5M15.500 1v4.500H11M3 12.500h4.500M3 12.500V17M3 12.500c1 1.800 2.500 2.800 4.500 3.200" stroke="#fff" strokeWidth="1.200" fill="none" />
            <circle cx="13" cy="13" r="4" fill="#0078d7" />
          </svg>
        </button>
        <button aria-label="Wi-Fi" className="mr-2">
          <svg viewBox="0 0 16 14" className="h-[14px] w-4">
            <path d="M.7 5.500a10.500 10.500 0 0 1 14.600 0M3 8a7 7 0 0 1 10 0M5.200 10.300a4 4 0 0 1 5.600 0" stroke="#fff" strokeWidth="1.200" fill="none" />
            <circle cx="8" cy="12" r="1.500" fill="#fff" />
          </svg>
        </button>
        <button aria-label="Volume" className="mr-2">
          <svg viewBox="0 0 16 14" className="h-[14px] w-4">
            <path d="M.6 5h2.900L7 1.500v11L3.500 9H.6z" stroke="#fff" strokeWidth="1.100" fill="none" strokeLinejoin="round" />
            <path d="M9 5a3 3 0 0 1 0 4M11 3a6 6 0 0 1 0 8M13 1.300a9 9 0 0 1 0 11.400" stroke="#fff" strokeWidth="1.100" fill="none" />
          </svg>
        </button>
        <button aria-label="Battery" className="mr-[15px]">
          <svg viewBox="0 0 16 14" className="h-[14px] w-4">
            <path d="M5 3.500h8.500v8H4V8" stroke="#fff" strokeWidth="1.200" fill="none" />
            <path d="M6 5h6v5H6zM14 6h2v3h-2zM0 2.500h5v2.500L3.500 6.500h-2L0 5zM1 .5h1v2H1zM3 .5h1v2H3zM2 6h1v6H2z" fill="#fff" />
          </svg>
        </button>
        <button className="mr-2 text-right leading-4">
          20:30
          <span className="block">06-Nov-2022</span>
        </button>
        <button className="flex size-4 items-center justify-center rounded-full bg-[#1190ff] text-[10px] text-black">2</button>
      </div>
    </footer>
  );
}

export default function App() {
  return (
    <div className="flex h-screen flex-col overflow-hidden font-['Noto_Sans',sans-serif]">
      <div className="shrink-0">
        <TabStrip />
        <Toolbar />
        <BookmarkBar />
      </div>
      <div className="flex min-h-0 flex-1 flex-col font-['Open_Sans','Noto_Sans',sans-serif]">
        <ConsoleHeader />
        <ConsoleBody />
        <ConsoleFooter />
      </div>
      <Taskbar />
    </div>
  );
}
